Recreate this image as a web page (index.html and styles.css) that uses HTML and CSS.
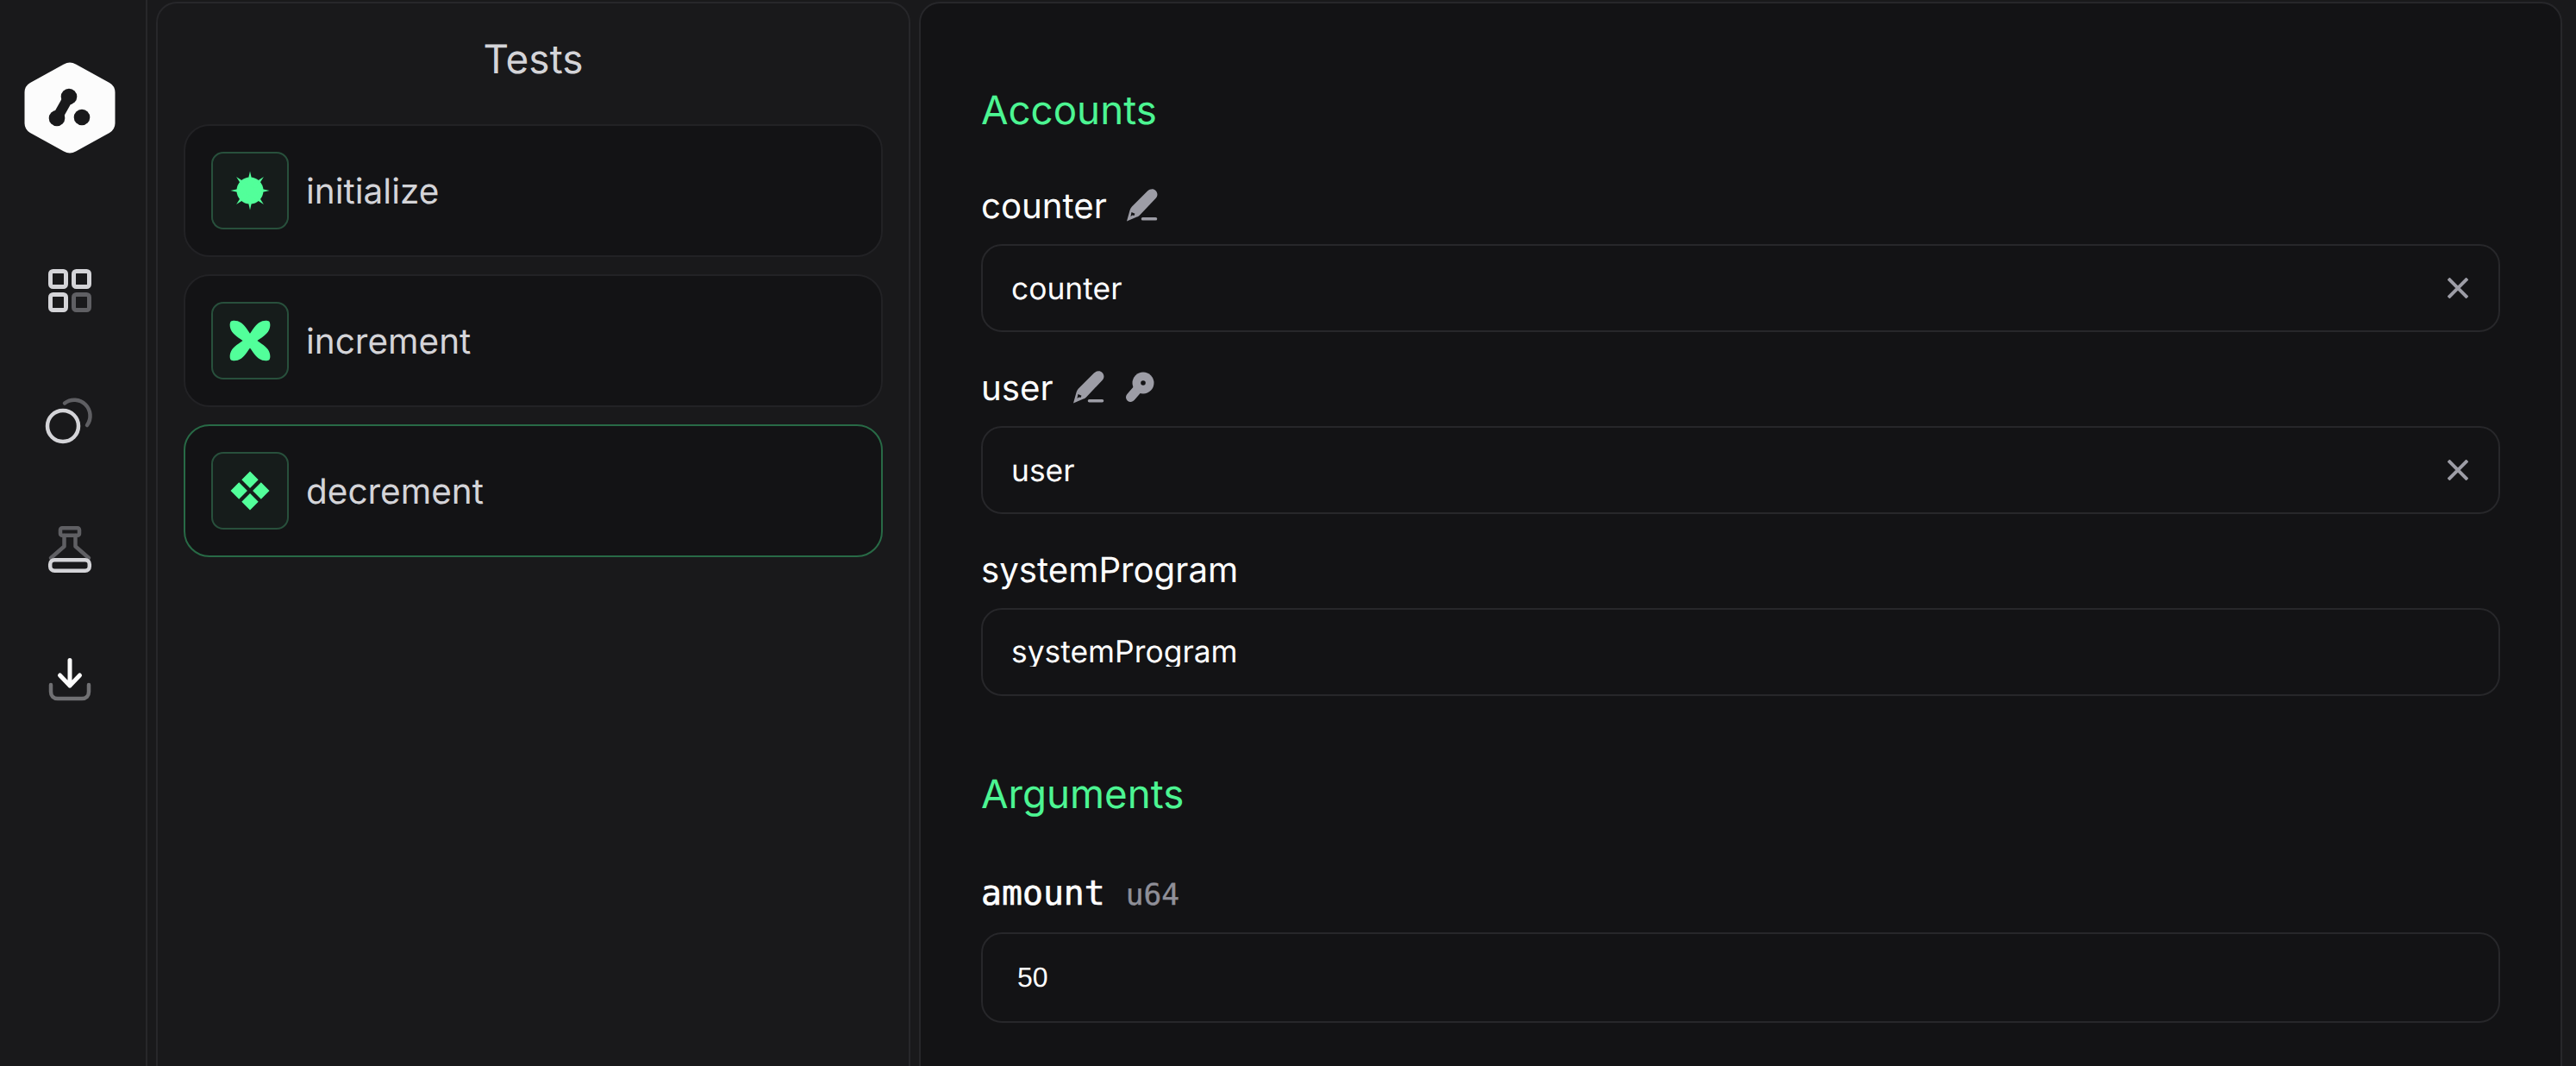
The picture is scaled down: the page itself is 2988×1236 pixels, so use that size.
FILE: index.html
```html
<!DOCTYPE html>
<html lang="en">
<head>
<meta charset="utf-8">
<title>Tests</title>
<link rel="stylesheet" href="styles.css">
</head>
<body>
<div class="app">
  <nav class="rail">
    <svg class="logo" viewBox="0 0 106 106" aria-hidden="true">
      <path class="logo-hex" d="M46 2.500a14 14 0 0 1 14 0L99 24a13 13 0 0 1 6.500 11v36a13 13 0 0 1-6.500 11L60 103.500a14 14 0 0 1-14 0L7 82a13 13 0 0 1-6.500-11V35A13 13 0 0 1 7 24Z"/>
      <circle class="logo-mark" cx="52" cy="40" r="9.300"/>
      <circle class="logo-mark" cx="38" cy="65" r="9.300"/>
      <circle class="logo-mark" cx="67" cy="64" r="9.300"/>
      <path class="logo-neck" d="M52 40L38 65"/>
    </svg>
    <svg class="rail-icon" viewBox="0 0 60 60" aria-hidden="true">
      <rect class="s-light" x="7.500" y="7.500" width="18" height="18" rx="3"/>
      <rect class="s-light" x="34.500" y="7.500" width="18" height="18" rx="3"/>
      <rect class="s-light" x="7.500" y="34.500" width="18" height="18" rx="3"/>
      <rect class="s-dim" x="34.500" y="34.500" width="18" height="18" rx="3"/>
    </svg>
    <svg class="rail-icon" viewBox="0 0 60 60" aria-hidden="true">
      <circle class="s-light thin" cx="22" cy="37" r="18"/>
      <path class="s-dim thin" d="M24 10.500A18.400 18.400 0 0 1 50 36"/>
    </svg>
    <svg class="rail-icon" viewBox="0 0 60 60" aria-hidden="true">
      <rect class="s-dim thin" x="19" y="5.200" width="22" height="8.600" rx="2"/>
      <path class="s-dim thin" d="M23.500 14V26.500L8 40M36.500 14V26.500L52 40"/>
      <rect class="s-light thin" x="7.200" y="42.200" width="45.600" height="12.600" rx="5"/>
    </svg>
    <svg class="rail-icon" viewBox="0 0 60 60" aria-hidden="true">
      <path class="s-tray thin" d="M8 37V45C8 50 11 53 16 53H44C49 53 52 50 52 45V37"/>
      <path class="s-white" d="M30 8.500V38M18.500 26L30 38L41.500 26"/>
    </svg>
  </nav>

  <section class="tests">
    <h1 class="tests-title">Tests</h1>
    <div class="test-list">
      <div class="test-card">
        <span class="test-icon">
          <svg viewBox="-24 -24 48 48" aria-hidden="true">
            <circle class="fill-green" r="15.500"/>
            <path class="fill-green" d="M0-22.500L5 0L0 22.500L-5 0Z"/>
            <path class="fill-green" d="M0-22.500L5 0L0 22.500L-5 0Z" transform="rotate(45)"/>
            <path class="fill-green" d="M0-22.500L5 0L0 22.500L-5 0Z" transform="rotate(90)"/>
            <path class="fill-green" d="M0-22.500L5 0L0 22.500L-5 0Z" transform="rotate(135)"/>
          </svg>
        </span>
        <span class="test-name">initialize</span>
      </div>
      <div class="test-card">
        <span class="test-icon">
          <svg viewBox="-24 -24 48 48" aria-hidden="true">
            <path class="fill-green" d="M0-5C8-6 16-8.500 22-7.500C27-6.500 31-3 31.500 0C31 3 27 6.500 22 7.500C16 8.500 8 6 0 5Z" transform="rotate(45)"/>
            <path class="fill-green" d="M0-5C8-6 16-8.500 22-7.500C27-6.500 31-3 31.500 0C31 3 27 6.500 22 7.500C16 8.500 8 6 0 5Z" transform="rotate(135)"/>
            <path class="fill-green" d="M0-5C8-6 16-8.500 22-7.500C27-6.500 31-3 31.500 0C31 3 27 6.500 22 7.500C16 8.500 8 6 0 5Z" transform="rotate(225)"/>
            <path class="fill-green" d="M0-5C8-6 16-8.500 22-7.500C27-6.500 31-3 31.500 0C31 3 27 6.500 22 7.500C16 8.500 8 6 0 5Z" transform="rotate(315)"/>
          </svg>
        </span>
        <span class="test-name">increment</span>
      </div>
      <div class="test-card is-selected">
        <span class="test-icon">
          <svg viewBox="-24 -24 48 48" aria-hidden="true"><path class="fill-green" d="M0-22.500L9.700-12.800L0-3.100L-9.700-12.800ZM0 3.100L9.700 12.800L0 22.500L-9.700 12.800ZM-12.800-9.700L-3.100 0L-12.800 9.700L-22.500 0ZM12.800-9.700L22.500 0L12.800 9.700L3.100 0Z"/></svg>
        </span>
        <span class="test-name">decrement</span>
      </div>
    </div>
  </section>

  <main class="detail">
    <h2 class="section-title">Accounts</h2>
    <div class="field-label first">
      <span>counter</span>
      <svg class="badge" viewBox="0 0 36 38" aria-hidden="true"><path class="fill-badge" fill-rule="evenodd" d="M0 37.500L3.500 25C4 23.500 5 21.500 6 20.500L24 2.500C27 0 31-.5 33.500 2C36 4.500 36 8 34 10.500L15 30.500C13.500 32 12 32.500 10.500 33ZM5.500 27L4.500 32L6.500 30.500L8.500 31L9.500 28.800Z"/><path class="line-badge" d="M18.500 34.800H33.500"/></svg>
    </div>
    <div class="input">
      <span class="input-value">counter</span>
      <svg class="clear" viewBox="0 0 24 24" aria-hidden="true"><path d="M1 1L23 23M23 1L1 23"/></svg>
    </div>
    <div class="field-label">
      <span>user</span>
      <svg class="badge" viewBox="0 0 36 38" aria-hidden="true"><path class="fill-badge" fill-rule="evenodd" d="M0 37.500L3.500 25C4 23.500 5 21.500 6 20.500L24 2.500C27 0 31-.5 33.500 2C36 4.500 36 8 34 10.500L15 30.500C13.500 32 12 32.500 10.500 33ZM5.500 27L4.500 32L6.500 30.500L8.500 31L9.500 28.800Z"/><path class="line-badge" d="M18.500 34.800H33.500"/></svg>
      <svg class="badge" viewBox="0 0 36 38" aria-hidden="true">
        <path class="key-shaft" d="M20 15L6.500 30.500"/>
        <circle class="fill-badge" cx="21" cy="14" r="12.500"/>
        <circle class="key-hole" cx="21" cy="14" r="2.800"/>
      </svg>
    </div>
    <div class="input">
      <span class="input-value">user</span>
      <svg class="clear" viewBox="0 0 24 24" aria-hidden="true"><path d="M1 1L23 23M23 1L1 23"/></svg>
    </div>
    <div class="field-label">
      <span>systemProgram</span>
    </div>
    <div class="input">
      <span class="input-value clipped">systemProgram</span>
    </div>

    <h2 class="section-title lower">Arguments</h2>
    <div class="field-label mono-label">
      <span class="arg-name">amount</span>
      <span class="arg-type">u64</span>
    </div>
    <div class="input number">
      <span class="number-value">50</span>
    </div>
  </main>
</div>
</body>
</html>
```
FILE: styles.css
```css
* { box-sizing: border-box; }
html, body { margin: 0; height: 100%; overflow: hidden; }
body { background: #19191b; font-family: Inter, "Liberation Sans", sans-serif; color: #fff; text-rendering: geometricPrecision; }

.app { display: flex; height: 1300px; }

.rail {
  flex: none;
  width: 171px;
  padding: 72px 8px 0 0;
  border-right: 2px solid #27272a;
  display: flex;
  flex-direction: column;
  align-items: center;
  gap: 90px;
  background: #19191b;
}
.logo { width: 106px; height: 106px; margin-bottom: 39px; }
.logo-hex { fill: #fcfcfc; }
.logo-mark { fill: #19191b; }
.logo-neck { fill: none; stroke: #19191b; stroke-width: 12px; }
.rail-icon { width: 60px; height: 60px; overflow: visible; fill: none; }
.s-light, .s-dim, .s-tray, .s-white { fill: none; stroke-width: 5px; stroke-linecap: round; stroke-linejoin: round; }
.thin { stroke-width: 4.500px; }
.s-light { stroke: #d4d4d8; }
.s-dim { stroke: #5f5f63; }
.s-tray { stroke: #707073; }
.s-white { stroke: #fcfcfc; }

.tests, .detail {
  border: 2px solid #27272a;
  border-bottom: 0;
  border-radius: 24px 24px 0 0;
  margin-top: 2px;
}
.tests {
  flex: none;
  width: 875px;
  margin-left: 10px;
  padding: 35px 30px 0;
  background: #19191b;
}
.tests-title {
  margin: 0 0 45px;
  font-size: 46px;
  line-height: 60px;
  font-weight: 400;
  color: #d4d4d8;
  text-align: center;
}
.test-list { display: flex; flex-direction: column; gap: 20px; }
.test-card {
  height: 154px;
  padding: 0 30px;
  display: flex;
  align-items: center;
  gap: 20px;
  background: #131315;
  border: 2px solid #222225;
  border-radius: 30px;
}
.test-card.is-selected { border-color: #286a46; }
.test-icon {
  flex: none;
  width: 90px;
  height: 90px;
  display: flex;
  align-items: center;
  justify-content: center;
  background: #161c1b;
  border: 2px solid #28503c;
  border-radius: 14px;
}
.test-icon svg { width: 48px; height: 48px; }
.fill-green { fill: #52ff9a; }
.test-name { font-size: 40.500px; color: #d4d4d8; }

.detail {
  flex: none;
  width: 1906px;
  margin-left: 10px;
  padding: 95px 70px 0;
  background: #131315;
}
.section-title {
  margin: 0;
  font-size: 45.700px;
  line-height: 60px;
  font-weight: 400;
  color: #4cf592;
}
.section-title.lower { margin-top: 85px; }
.field-label {
  height: 56px;
  margin: 36px 0 17px;
  display: flex;
  align-items: center;
  gap: 24px;
  font-size: 40.200px;
  color: #fff;
}
.field-label.first { margin-top: 51px; }
.field-label .badge:first-of-type { margin-left: -1px; }
.mono-label { margin: 55px 0 18px; padding-top: 6px; gap: 0; align-items: baseline; }
.badge { width: 36px; height: 38px; flex: none; }
.fill-badge { fill: #9d9da6; }
.line-badge { fill: none; stroke: #9d9da6; stroke-width: 3.500px; stroke-linecap: round; }
.key-shaft { fill: none; stroke: #9d9da6; stroke-width: 11px; stroke-linecap: round; }
.key-hole { fill: #131315; }
.input {
  height: 102px;
  padding: 0 35px 0 33px;
  display: flex;
  align-items: center;
  justify-content: space-between;
  background: #131315;
  border: 2px solid #27272a;
  border-radius: 24px;
}
.input-value { font-size: 35.400px; color: #fff; }
.input-value.clipped {
  display: block;
  height: 37px;
  margin-bottom: 3px;
  line-height: 40px;
  overflow: hidden;
}
.clear { width: 24px; height: 24px; flex: none; fill: none; stroke: #9d9da6; stroke-width: 4px; }
.arg-name { font-family: "DejaVu Sans Mono", "Liberation Mono", monospace; font-size: 39.800px; -webkit-text-stroke: 0.6px #fff; }
.arg-type { margin-left: 24px; font-family: "DejaVu Sans Mono", "Liberation Mono", monospace; font-size: 34.500px; color: #8f8f98; -webkit-text-stroke: 0.4px #8f8f98; }
.input.number { height: 105px; padding-left: 40px; }
.number-value { font-family: "Liberation Sans", Arial, sans-serif; font-size: 32px; color: #fff; }
```
